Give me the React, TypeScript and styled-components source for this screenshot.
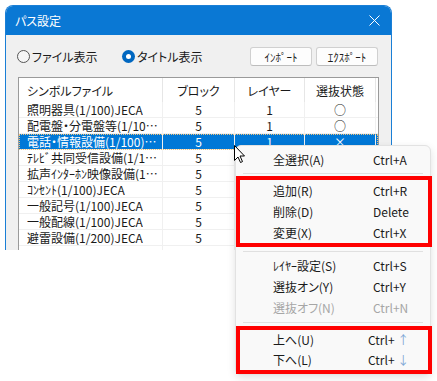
import styled, { createGlobalStyle } from "styled-components";

const GlobalStyle = createGlobalStyle`
  html, body {
    margin: 0;
    padding: 0;
    background: #ffffff;
  }
  body {
    font-family: "Noto Sans CJK JP", "Noto Sans", sans-serif;
    font-size: 12px;
    font-feature-settings: "palt";
    color: #1a1a1a;
  }
`;

const Page = styled.div`
  position: relative;
  width: 437px;
  height: 381px;
  overflow: hidden;
`;

const Window = styled.div`
  margin: 5px 0 0 5px;
  width: 387px;
  height: 245px;
  box-sizing: border-box;
  border: 1px solid #1a7fd6;
  border-bottom: none;
  border-radius: 8px 8px 0 0;
  background: #f0f0f0;
  overflow: hidden;
  display: flex;
  flex-direction: column;
`;

const TitleBar = styled.div`
  height: 29px;
  flex-shrink: 0;
  background: #0a78d4;
  color: #ffffff;
  display: flex;
  align-items: center;
  justify-content: space-between;
  padding: 0 11px 0 9px;
  font-size: 12px;
`;

const Toolbar = styled.div`
  margin-top: 12px;
  height: 20px;
  display: flex;
  align-items: center;
  padding: 0 13px 0 11px;
`;

const RadioLabel = styled.label<{ $w?: number }>`
  display: flex;
  align-items: center;
  gap: 2px;
  width: ${(p) => (p.$w ? `${p.$w}px` : "auto")};
  font-size: 12px;
  line-height: 14px;
`;

const RadioDot = styled.span<{ $on?: boolean }>`
  width: 13px;
  height: 13px;
  box-sizing: border-box;
  border-radius: 50%;
  display: inline-flex;
  align-items: center;
  justify-content: center;
  border: ${(p) => (p.$on ? "none" : "1px solid #555")};
  background: ${(p) => (p.$on ? "#0067c0" : "#f6f6f6")};

  &::after {
    content: "";
    width: 5px;
    height: 5px;
    border-radius: 50%;
    background: #ffffff;
    display: ${(p) => (p.$on ? "block" : "none")};
  }
`;

const Spacer = styled.div`
  flex: 1;
`;

const Button = styled.button`
  height: 19px;
  width: 62px;
  margin-left: 4px;
  padding: 0;
  box-sizing: border-box;
  border: 1px solid #d0d0d0;
  border-bottom-color: #bdbdbd;
  border-radius: 3px;
  background: #fdfdfd;
  font-family: inherit;
  font-feature-settings: "palt";
  font-size: 11px;
  line-height: 16px;
  color: #1a1a1a;
`;

const Table = styled.div`
  margin: 11px 12px 0 12px;
  flex: 1;
  background: #ffffff;
  border: 1px solid #9a9a9a;
  border-bottom: none;
`;

const Row = styled.div<{ $head?: boolean; $selected?: boolean; $h?: number }>`
  display: grid;
  grid-template-columns: 144px 72px 70px 71px 1fr;
  height: ${(p) => p.$h ?? 16}px;
  box-sizing: border-box;
  background: ${(p) => (p.$selected ? "#0078d7" : "#ffffff")};
  color: ${(p) => (p.$selected ? "#ffffff" : "#1a1a1a")};
  border-bottom: ${(p) => (p.$head ? "none" : "1px solid #f0f0f0")};
  outline: ${(p) => (p.$selected ? "1px dotted #f3c37a" : "none")};
  outline-offset: -1px;
`;

const Cell = styled.div<{ $left?: boolean; $head?: boolean }>`
  display: flex;
  align-items: center;
  justify-content: ${(p) => (p.$left ? "flex-start" : "center")};
  padding-left: ${(p) => (p.$left ? "8px" : "0")};
  padding-right: ${(p) => (p.$left ? "3px" : "0")};
  border-right: 1px solid ${(p) => (p.$head ? "#e6e6e6" : "#f0f0f0")};
  min-width: 0;
  font-size: 12px;
  line-height: 15px;

  &:last-child {
    border-right: none;
  }
`;

const Clip = styled.span`
  overflow: hidden;
  white-space: nowrap;
  text-overflow: ellipsis;
`;

const Menu = styled.div`
  position: absolute;
  left: 235px;
  top: 145px;
  width: 196px;
  box-sizing: border-box;
  padding-top: 3px;
  background: #f9f9f9;
  border: 1px solid #e2e2e2;
  border-radius: 6px;
  box-shadow: 0 3px 8px rgba(0, 0, 0, 0.12);
`;

const Item = styled.div<{ $disabled?: boolean; $h?: number; $inset?: number }>`
  display: grid;
  grid-template-columns: 100px 1fr;
  height: ${(p) => p.$h ?? 21}px;
  align-items: center;
  padding-left: ${(p) => 37 - (p.$inset ?? 0)}px;
  font-size: 12px;
  line-height: 14px;
  color: ${(p) => (p.$disabled ? "#a6a6a6" : "#1a1a1a")};
`;

const Key = styled.span<{ $shift?: number }>`
  margin-left: ${(p) => -(p.$shift ?? 0)}px;
  white-space: pre;
`;

const Arrow = styled.span`
  color: #7fa8d6;
`;

const Separator = styled.div<{ $h?: number }>`
  height: ${(p) => p.$h ?? 6}px;
  display: flex;
  align-items: center;
  padding: 0 7px;

  &::after {
    content: "";
    flex: 1;
    height: 1px;
    background: #e0e0e0;
  }
`;

const Mark = styled.div`
  border: 4px solid #ff0000;
  margin-right: -2px;
`;

const Cursor = styled.svg`
  position: absolute;
  left: 233px;
  top: 144px;
`;

type Entry = { name: string; block: string; layer: string; sel: string; selected?: boolean };

const rows: Entry[] = [
  { name: "照明器具(1/100)JECA", block: "5", layer: "1", sel: "○" },
  { name: "配電盤・分電盤等(1/100)JECA", block: "5", layer: "1", sel: "○" },
  { name: "電話・情報設備(1/100)JECA", block: "5", layer: "1", sel: "×", selected: true },
  { name: "ﾃﾚﾋﾞ共同受信設備(1/100)JECA", block: "5", layer: "1", sel: "○" },
  { name: "拡声ｲﾝﾀｰﾎﾝ映像設備(1/100)JECA", block: "5", layer: "1", sel: "○" },
  { name: "ｺﾝｾﾝﾄ(1/100)JECA", block: "5", layer: "1", sel: "○" },
  { name: "一般記号(1/100)JECA", block: "5", layer: "1", sel: "○" },
  { name: "一般配線(1/100)JECA", block: "5", layer: "1", sel: "○" },
  { name: "避雷設備(1/200)JECA", block: "5", layer: "1", sel: "○" },
];

function App() {
  return (
    <Page>
      <GlobalStyle />
      <Window>
        <TitleBar>
          <span>パス設定</span>
          <svg width="11" height="11" viewBox="0 0 11 11">
            <path d="M0.5 0.5 L10.5 10.5 M10.5 0.5 L0.5 10.5" stroke="#ffffff" strokeWidth="1" />
          </svg>
        </TitleBar>
        <Toolbar>
          <RadioLabel $w={105}>
            <RadioDot />
            ファイル表示
          </RadioLabel>
          <RadioLabel>
            <RadioDot $on />
            タイトル表示
          </RadioLabel>
          <Spacer />
          <Button>ｲﾝﾎﾟｰﾄ</Button>
          <Button>ｴｸｽﾎﾟｰﾄ</Button>
        </Toolbar>
        <Table>
          <Row $head $h={24}>
            <Cell $left $head>シンボルファイル</Cell>
            <Cell $head>ブロック</Cell>
            <Cell $head>レイヤー</Cell>
            <Cell $head>選抜状態</Cell>
            <Cell $head />
          </Row>
          {rows.map((r) => (
            <Row key={r.name} $selected={r.selected}>
              <Cell $left>
                <Clip>{r.name}</Clip>
              </Cell>
              <Cell>{r.block}</Cell>
              <Cell>{r.layer}</Cell>
              <Cell>{r.sel}</Cell>
              <Cell />
            </Row>
          ))}
          <Row $h={12}>
            <Cell />
            <Cell />
            <Cell />
            <Cell />
            <Cell />
          </Row>
        </Table>
      </Window>

      <Menu>
        <Item>
          <span>全選択(A)</span>
          <Key>Ctrl+A</Key>
        </Item>
        <Separator />
        <Mark>
          <Item $inset={4}>
            <span>追加(R)</span>
            <Key>Ctrl+R</Key>
          </Item>
          <Item $inset={4}>
            <span>削除(D)</span>
            <Key>Delete</Key>
          </Item>
          <Item $inset={4}>
            <span>変更(X)</span>
            <Key>Ctrl+X</Key>
          </Item>
        </Mark>
        <Separator $h={8} />
        <Item>
          <span>ﾚｲﾔｰ設定(S)</span>
          <Key>Ctrl+S</Key>
        </Item>
        <Item>
          <span>選抜オン(Y)</span>
          <Key>Ctrl+Y</Key>
        </Item>
        <Item $disabled>
          <span>選抜オフ(N)</span>
          <Key>Ctrl+N</Key>
        </Item>
        <Separator $h={8} />
        <Mark>
          <Item $h={20} $inset={4}>
            <span>上へ(U)</span>
            <Key $shift={5}>
              Ctrl+ <Arrow>↑</Arrow>
            </Key>
          </Item>
          <Item $h={20} $inset={4}>
            <span>下へ(L)</span>
            <Key $shift={5}>
              Ctrl+ <Arrow>↓</Arrow>
            </Key>
          </Item>
        </Mark>
      </Menu>

      <Cursor width="13" height="20" viewBox="0 0 13 20">
        <path
          d="M1.5 1.5 L1.5 16.5 L5 13 L7.5 18.5 L9.5 17.6 L7 12 L11.5 12 Z"
          fill="#ffffff"
          stroke="#000000"
          strokeWidth="1"
          strokeLinejoin="miter"
        />
      </Cursor>
    </Page>
  );
}

export default App;
